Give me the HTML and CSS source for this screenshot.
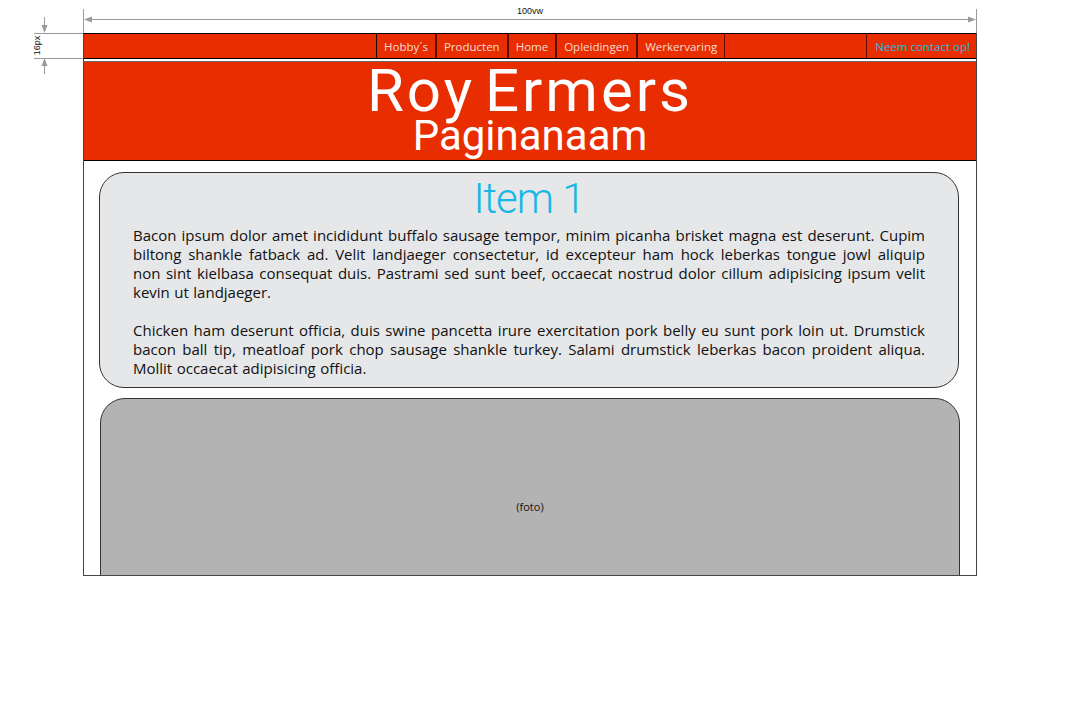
FILE: index.html
```html
<!DOCTYPE html>
<html lang="nl">
<head>
<meta charset="utf-8">
<title>Roy Ermers – wireframe</title>
<link rel="stylesheet" href="styles.css">
</head>
<body>
<svg class="annot" width="1074" height="708" viewBox="0 0 1074 708" aria-hidden="false">
  <g stroke="#9a9a9a" stroke-width="1" fill="none">
    <line x1="83.5" y1="9" x2="83.5" y2="33"/>
    <line x1="976.5" y1="9" x2="976.5" y2="33"/>
    <line x1="86" y1="19.5" x2="973" y2="19.5"/>
    <line x1="34" y1="33.5" x2="83" y2="33.5"/>
    <line x1="34" y1="58.5" x2="83" y2="58.5"/>
    <line x1="44.5" y1="17" x2="44.5" y2="29"/>
    <line x1="44.5" y1="62" x2="44.5" y2="74"/>
  </g>
  <g fill="#9a9a9a">
    <polygon points="84,19.5 92,16.5 92,22.5"/>
    <polygon points="976,19.5 968,16.5 968,22.5"/>
    <polygon points="44.5,33 41.5,25 47.5,25"/>
    <polygon points="44.5,58 41.5,66 47.5,66"/>
  </g>
  <text x="530" y="14" class="annot-text" text-anchor="middle">100vw</text>
  <text x="0" y="0" class="annot-text" text-anchor="middle" transform="translate(40 45.5) rotate(-90)">16px</text>
</svg>

<div class="frame">
  <nav class="nav">
    <ul class="nav-list">
      <li class="nav-item">Hobby´s</li>
      <li class="nav-item">Producten</li>
      <li class="nav-item">Home</li>
      <li class="nav-item">Opleidingen</li>
      <li class="nav-item">Werkervaring</li>
    </ul>
    <a class="nav-contact">Neem contact op!</a>
  </nav>

  <header class="header">
    <h1 class="title">Roy Ermers</h1>
    <p class="subtitle">Paginanaam</p>
  </header>

  <main class="main">
    <section class="card card-text">
      <h2 class="card-title">Item 1</h2>
      <p class="card-p">Bacon ipsum dolor amet incididunt buffalo sausage tempor, minim picanha brisket magna est deserunt. Cupim biltong shankle fatback ad. Velit landjaeger consectetur, id excepteur ham hock leberkas tongue jowl aliquip non sint kielbasa consequat duis. Pastrami sed sunt beef, occaecat nostrud dolor cillum adipisicing ipsum velit kevin ut landjaeger.</p>
      <p class="card-p">Chicken ham deserunt officia, duis swine pancetta irure exercitation pork belly eu sunt pork loin ut. Drumstick bacon ball tip, meatloaf pork chop sausage shankle turkey. Salami drumstick leberkas bacon proident aliqua. Mollit occaecat adipisicing officia.</p>
    </section>
    <section class="card card-photo">
      <span class="photo-label">(foto)</span>
    </section>
  </main>
</div>
</body>
</html>
```

FILE: styles.css
```css
html, body {
  margin: 0;
  padding: 0;
  background: #ffffff;
}

body {
  position: relative;
  width: 1074px;
  height: 708px;
  overflow: hidden;
  font-family: "Open Sans", "Noto Sans", sans-serif;
}

.annot {
  position: absolute;
  left: 0;
  top: 0;
  pointer-events: none;
}

.annot-text {
  font-family: "Liberation Sans", Arial, sans-serif;
  font-size: 9px;
  fill: #111;
}

.frame {
  box-sizing: border-box;
  margin: 33px 0 0 83px;
  width: 894px;
  height: 543px;
  border-left: 1px solid #444;
  border-right: 1px solid #444;
  border-bottom: 1px solid #444;
  overflow: hidden;
  display: flex;
  flex-direction: column;
}

.nav {
  box-sizing: border-box;
  height: 26px;
  flex: none;
  background: #e82e00;
  border-top: 1px solid #000;
  border-bottom: 1px solid #000;
  display: flex;
  align-items: stretch;
}

.nav-list {
  list-style: none;
  margin: 0 0 0 292px;
  padding: 0;
  display: flex;
}

.nav-item {
  display: flex;
  align-items: center;
  padding: 0 7px;
  border-left: 1px solid #5e0c00;
  border-right: 1px solid #5e0c00;
  font-size: 11.5px;
  color: #f7dcd6;
  white-space: nowrap;
}

.nav-item:first-child {
  border-left-color: #1a0300;
}

.nav-contact {
  margin-left: auto;
  display: flex;
  align-items: center;
  padding: 0 6px 0 8px;
  border-left: 1px solid #5e0c00;
  font-size: 11.5px;
  color: #20bce6;
  white-space: nowrap;
}

.header {
  flex: none;
  margin-top: 2px;
  background: #e82e00;
  border-top: 1px solid #6a6a6a;
  border-bottom: 1px solid #000;
  padding-bottom: 8px;
  text-align: center;
  color: #ffffff;
  font-family: Roboto, "Noto Sans", sans-serif;
}

.title {
  margin: 0;
  font-weight: 400;
  font-size: 60px;
  line-height: 57px;
  letter-spacing: 3px;
  word-spacing: -8px;
}

.subtitle {
  margin: 0;
  font-weight: 400;
  font-size: 42px;
  line-height: 33px;
}

.main {
  flex: none;
  padding: 11px 16px 0 16px;
  display: flex;
  flex-direction: column;
  gap: 10px;
}

.card {
  box-sizing: border-box;
  border: 1px solid #333;
  border-radius: 25px;
}

.card-text {
  margin: 0 1px 0 -1px;
  background: #e6e7e8;
  padding: 4px 33px 9px 33px;
}

.card-title {
  margin: 0 0 6px 0;
  font-family: Roboto, "Noto Sans", sans-serif;
  font-weight: 300;
  font-size: 42px;
  line-height: 43px;
  letter-spacing: -1px;
  text-align: center;
  color: #17b6e6;
}

.card-p {
  margin: 0;
  font-size: 15px;
  line-height: 19px;
  word-spacing: 0.6px;
  text-align: justify;
  color: #111;
}

.card-p + .card-p {
  margin-top: 19px;
}

.card-photo {
  flex: none;
  height: 216px;
  background: #b3b3b3;
  display: flex;
  align-items: center;
  justify-content: center;
}

.photo-label {
  font-size: 11px;
  color: #111;
}
```
